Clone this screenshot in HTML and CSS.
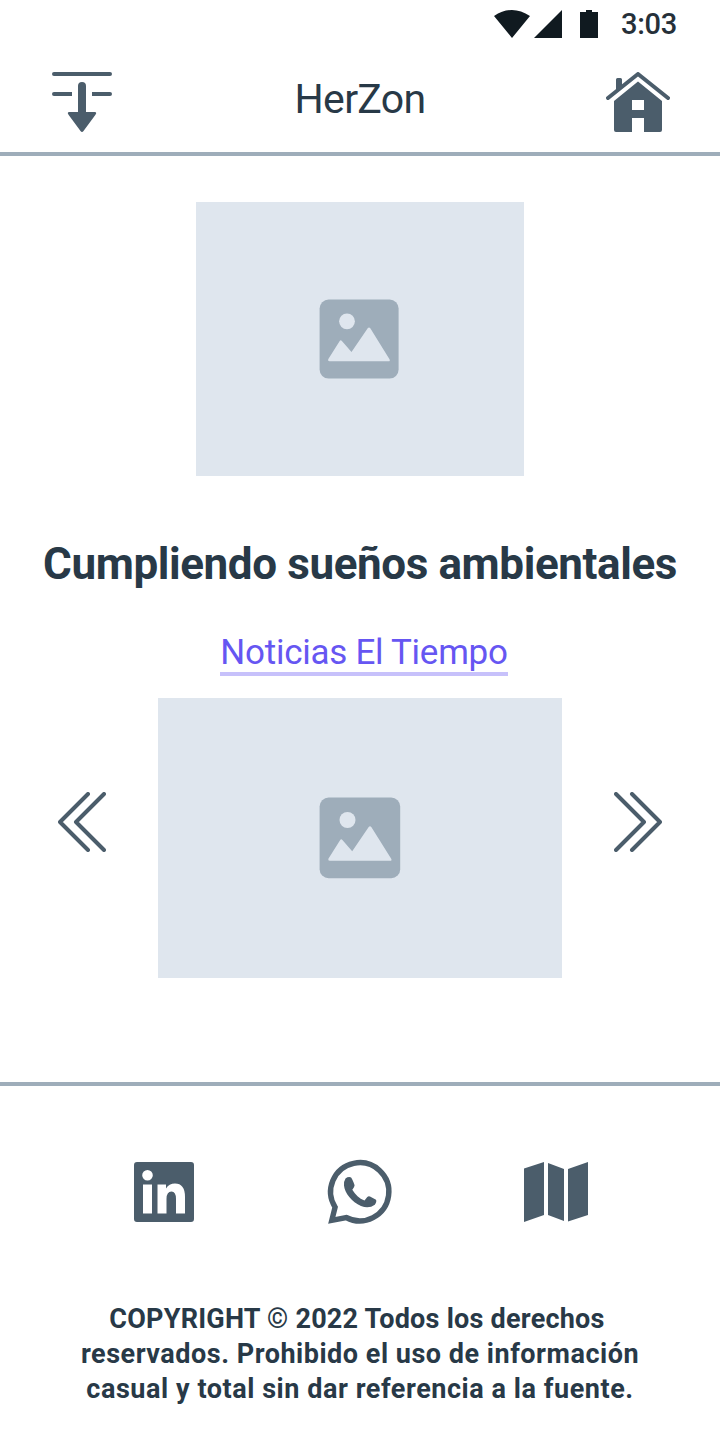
FILE: index.html
```html
<!DOCTYPE html>
<html lang="es">
<head>
<meta charset="utf-8">
<title>HerZon</title>
<link rel="stylesheet" href="styles.css">
</head>
<body>
<div class="screen">
  <div class="status">
    <svg class="signals" width="104" height="28" viewBox="0 0 104 28"><path d="M0 6Q18-6 36 6L18 28ZM68 0V28H40ZM86 2H92V0H98V2H104V28H86Z"/></svg>
    <span class="time">3:03</span>
  </div>
  <header class="topbar">
    <svg class="icon" width="60" height="60" viewBox="0 0 60 60"><path d="M2 0H58a2 2 0 0 1 0 4H2a2 2 0 0 1 0-4ZM2 20H20V24H2a2 2 0 0 1 0-4ZM40 20H58a2 2 0 0 1 0 4H40Z"/><path d="M26 14a4 4 0 0 1 8 0V40H42.500Q45.500 40 43.300 43L31.500 59Q30 61 28.500 59L16.700 43Q14.500 40 17.500 40H26Z"/></svg>
    <h1 class="brand">HerZon</h1>
    <svg class="icon" width="64" height="60" viewBox="0 0 64 60"><path d="M2 26L32 2L62 26" fill="none" stroke="currentColor" stroke-width="4" stroke-linecap="round" stroke-linejoin="round"/><path d="M10 20V7.500Q10 6 11.500 6H14.500Q16 6 16 7.500V15ZM32 9.500L56 29V58Q56 60 54 60H38V46H26V60H10Q8 60 8 58V29ZM26 28V38H38V28Z" fill-rule="evenodd"/></svg>
  </header>
  <main class="content">
    <div class="photo photo-top">
      <svg class="picture" width="80" height="80" viewBox="0 0 80 80"><rect x=".6" y=".6" width="79" height="79" rx="9" fill="#9eadba"/><g fill="#dfe6ee"><circle cx="28" cy="22.300" r="7.900"/><path d="M9.200 60.300L20.700 42Q21.700 40.500 22.900 42L32.500 53L48.700 29.300Q50 27.700 51.300 29.300L70.500 60.300Q71.500 62.300 69.500 62.300H10.500Q8.500 62.300 9.200 60.300Z"/></g></svg>
    </div>
    <h2 class="headline">Cumpliendo sueños ambientales</h2>
    <a class="news">Noticias El Tiempo</a>
    <div class="carousel">
      <svg class="icon arrow" width="48" height="60" viewBox="0 0 48 60"><path d="M30 2L2 30L30 58M46 2L18 30L46 58"/></svg>
      <div class="photo photo-slide">
        <svg class="picture" width="82" height="82" viewBox="0 0 82 82"><rect x=".6" y=".6" width="80.600" height="80.600" rx="9" fill="#9eadba"/><g fill="#dfe6ee"><circle cx="28.500" cy="23" r="8"/><path d="M9.400 61.700L21.200 43Q22.200 41.500 23.400 43L33.200 54.300L49.700 30Q51 28.400 52.300 30L72.200 61.700Q73.200 63.700 71.200 63.700H10.700Q8.700 63.700 9.400 61.700Z"/></g></svg>
      </div>
      <svg class="icon arrow" width="48" height="60" viewBox="0 0 48 60"><path d="M2 2L30 30L2 58M18 2L46 30L18 58"/></svg>
    </div>
  </main>
  <footer class="footer">
    <div class="links">
      <svg class="icon low" width="60" height="60" viewBox="0 0 60 60"><path fill-rule="evenodd" d="M3 0H57Q60 0 60 3V57Q60 60 57 60H3Q0 60 0 57V3Q0 0 3 0ZM13.500 8a5.300 5.300 0 1 0 0 10.600a5.300 5.300 0 1 0 0-10.600ZM9 22.500H18V51.500H9ZM23.500 22.500H32V26.500Q35 21.500 41 21.500Q51 21.500 51 35V51.500H42V37Q42 29.500 37.500 29.500Q32.500 29.500 32.500 37V51.500H23.500Z"/></svg>
      <svg class="icon chat" width="64" height="64" viewBox="0 0 64 64"><path fill="none" stroke="currentColor" stroke-width="5.400" d="M3.800 60.300L7.100 47.200A29.100 29.100 0 1 1 18.200 57.500Z"/><path d="M17.500 18.500Q20 16.500 22.500 17.200Q24 17.500 26.600 25.300Q26.500 27 24.300 29.800C27.500 35 31 38.500 36.500 40.500L39.300 37Q40.500 35.800 42 36.500L48 39.700Q49 41.500 46.800 44.700Q41 49 33 46C24 42 16.500 33 16 25.500Q15.800 21 17.500 18.500Z"/></svg>
      <svg class="icon low" width="64" height="60" viewBox="0 0 64 60"><path d="M0 6.500L20 0V53L0 60ZM24 1L40 7V59L24 53ZM44 7L64 0V53L44 59.500Z"/></svg>
    </div>
    <p class="copyright"><span class="l1">COPYRIGHT © 2022 Todos los derechos</span><span class="l2">reservados. Prohibido el uso de información</span><span class="l3">casual y total sin dar referencia a la fuente.</span></p>
  </footer>
</div>
</body>
</html>
```
FILE: styles.css
```css
* { box-sizing: border-box; }
body { margin: 0; background: #fff; color: #283947; font-family: Roboto, sans-serif; }
svg { display: block; flex: none; }
h1, h2, p { margin: 0; }
.screen { width: 720px; height: 1440px; display: flex; flex-direction: column; overflow: hidden; }
.status { height: 48px; padding: 0 43px 0 494px; display: flex; align-items: center; justify-content: space-between; color: #263039; }
.signals { fill: #101a20; }
.time { font-size: 29px; font-weight: 500; white-space: nowrap; letter-spacing: -0.3px; }
.topbar { height: 108px; padding: 24px 50px 20px 52px; border-bottom: 4px solid #9eadba; display: flex; justify-content: space-between; align-items: flex-start; }
.icon { color: #4b5d6b; fill: currentColor; }
.brand { font-size: 41px; line-height: 55px; font-weight: 400; letter-spacing: -0.7px; padding-left: 2px; }
.content { height: 926px; padding-top: 46px; display: flex; flex-direction: column; align-items: center; }
.photo { background: #dfe6ee; flex: none; }
.photo-top { width: 328px; height: 274px; padding: 97px 0 0 123px; }
.photo-slide { width: 404px; height: 280px; padding: 99px 0 0 161px; }
.headline { margin-top: 61px; font-size: 44px; line-height: 54px; font-weight: 700; white-space: nowrap; letter-spacing: -0.4px; }
.news { margin: 41px 0 0 8px; width: 288px; height: 44px; text-align: center; border-bottom: 4px solid #c7c1fb; color: #6656f2; font-size: 35px; line-height: 41px; white-space: nowrap; letter-spacing: -0.27px; }
.carousel { margin-top: 22px; width: 604px; height: 280px; display: flex; justify-content: space-between; }
.icon.arrow { margin-top: 94px; fill: none; stroke: currentColor; stroke-width: 4; stroke-linecap: round; stroke-linejoin: round; }
.footer { border-top: 4px solid #9eadba; height: 358px; }
.links { height: 138px; padding: 74px 132px 0 134px; display: flex; justify-content: space-between; }
.low { margin-top: 2px; }
.chat { margin-left: 2px; overflow: visible; }
.copyright { margin-top: 78px; display: flex; flex-direction: column; align-items: center; font-size: 27px; line-height: 35px; font-weight: 700; white-space: nowrap; }
.l1 { margin-right: 6px; letter-spacing: 0.23px; }
.l2 { letter-spacing: 0.52px; }
.l3 { letter-spacing: 0.55px; }
```
